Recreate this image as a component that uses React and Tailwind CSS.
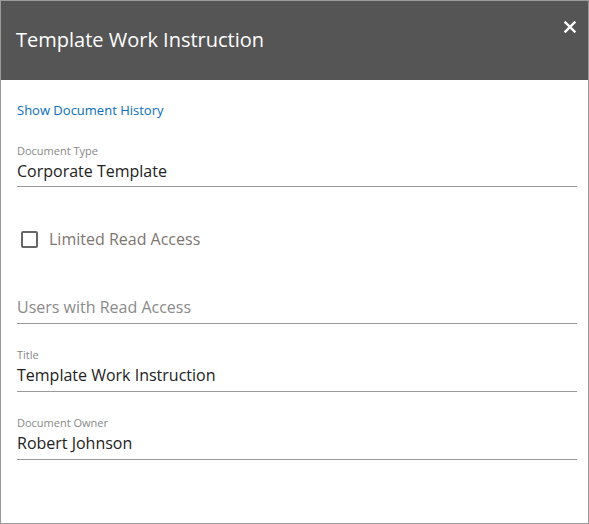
import { useState } from "react";

function Field({ label, value, className = "" }) {
  return (
    <div className={`border-b border-[#999] ${className}`}>
      <p className="text-[11px] leading-[16px] text-[#888]">{label}</p>
      <p className="text-[16px] leading-[24px] text-[#222]">{value}</p>
    </div>
  );
}

export default function App() {
  const [limited, setLimited] = useState(false);

  return (
    <div
      className="w-[589px] h-[524px] border border-[#9a9a9a] bg-white flex flex-col"
      style={{ fontFamily: '"Open Sans", "Noto Sans", sans-serif' }}
    >
      <div className="h-[79px] shrink-0 bg-[#555555] flex items-center justify-between pl-[15px] pr-[10px]">
        <h1 className="text-[20px] leading-[28px] text-white -mt-[2px]">
          Template Work Instruction
        </h1>
        <button className="self-start mt-[18px] w-[16px] h-[16px] flex items-center justify-center text-white">
          <svg width="12" height="12" viewBox="0 0 12 12">
            <path
              d="M1.5 1.5 L10.5 10.5 M10.5 1.5 L1.5 10.5"
              stroke="currentColor"
              strokeWidth="2.4"
              strokeLinecap="square"
            />
          </svg>
        </button>
      </div>

      <div className="flex flex-col pl-[16px] pr-[11px] pt-[21px]">
        <a className="text-[13px] leading-[18px] text-[#0a6ebd] cursor-pointer">
          Show Document History
        </a>

        <Field
          className="mt-[24px] pb-[3px]"
          label="Document Type"
          value="Corporate Template"
        />

        <label className="mt-[41px] flex items-center gap-[11px] cursor-pointer">
          <span
            onClick={() => setLimited(!limited)}
            className="ml-[4px] w-[17px] h-[17px] border-2 border-[#666] rounded-[2px] bg-white"
          />
          <span className="text-[16px] leading-[22px] text-[#7d7671]">
            Limited Read Access
          </span>
        </label>

        <div className="mt-[46px] border-b border-[#999] pb-[5px]">
          <p className="text-[16px] leading-[22px] text-[#8a8a8a]">
            Users with Read Access
          </p>
        </div>

        <Field className="mt-[23px] pb-[4px]" label="Title" value="Template Work Instruction" />
        <Field className="mt-[23px] pb-[4px]" label="Document Owner" value="Robert Johnson" />
      </div>
    </div>
  );
}
